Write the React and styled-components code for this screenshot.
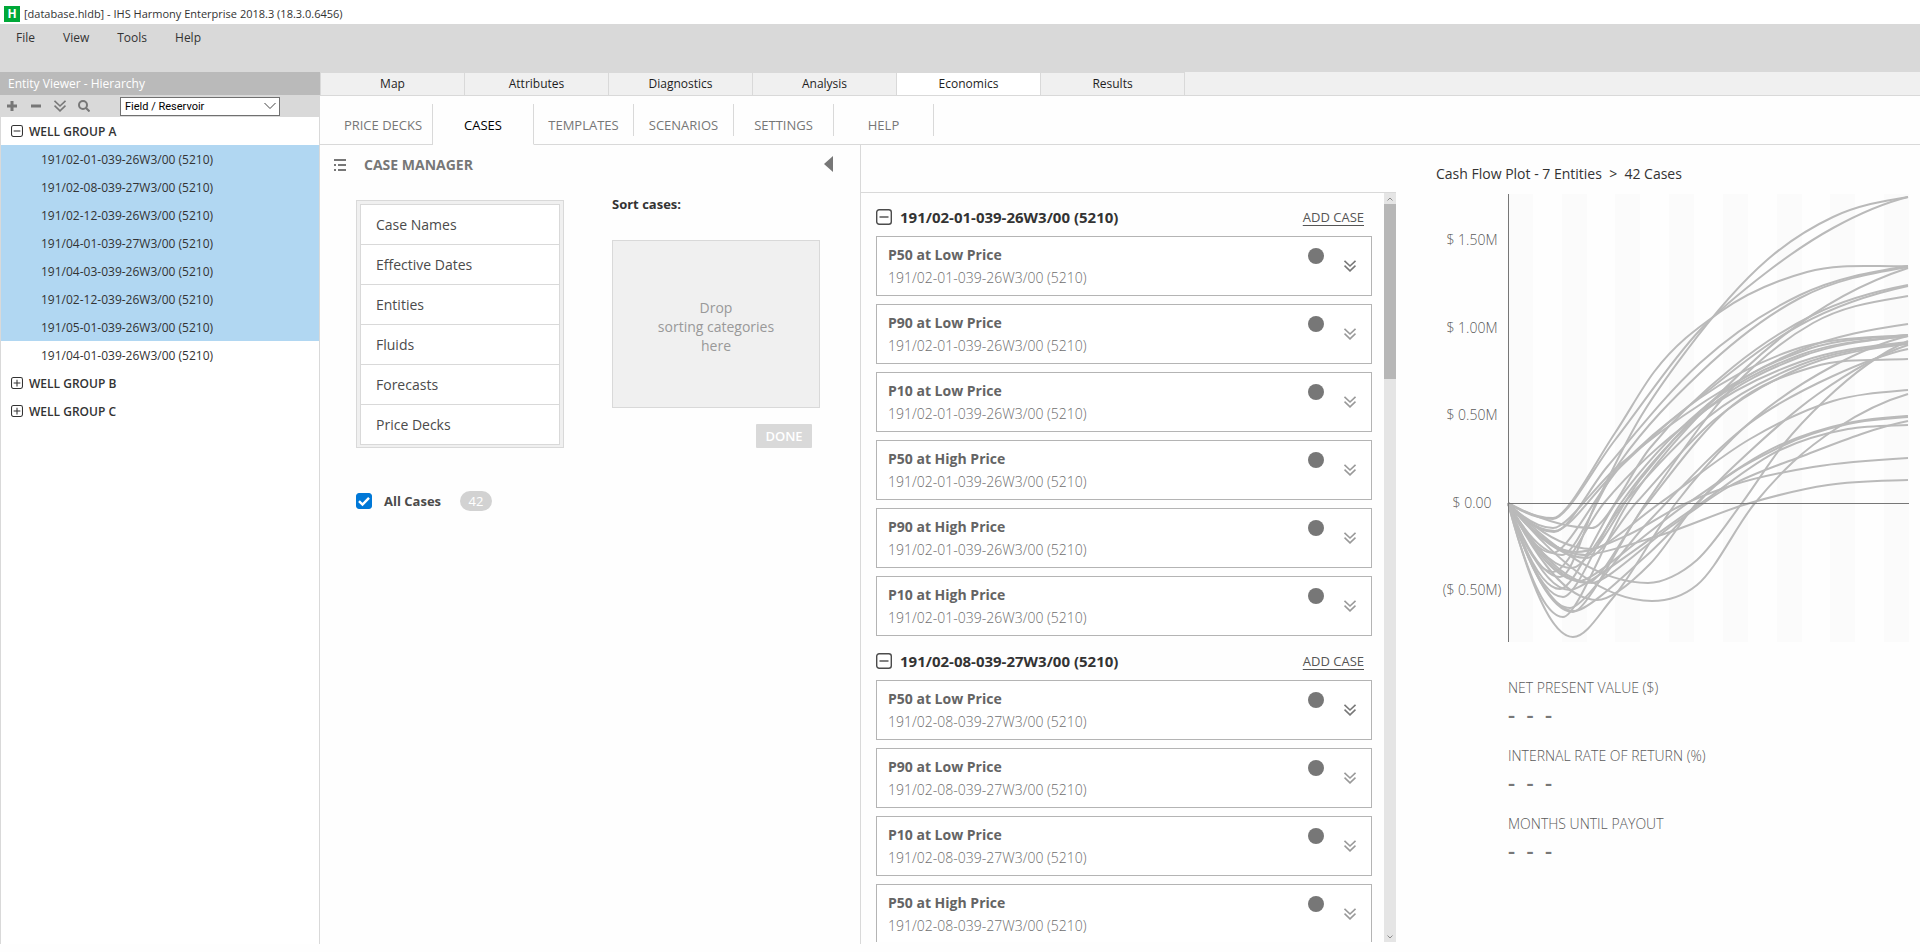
import React, { useState } from "react";
import styled, { createGlobalStyle } from "styled-components";

const GlobalStyle = createGlobalStyle`
  * {
    box-sizing: border-box;
  }

  body {
    margin: 0;
    background: #fefefe;
    color: #333;
    font-family: "Open Sans", "Noto Sans", sans-serif;
    font-size: 12px;
  }

  button,
  select,
  input {
    margin: 0;
    padding: 0;
    border: 0;
    background: none;
    color: inherit;
    font: inherit;
  }
`;

const Page = styled.div`
  display: flex;
  flex-direction: column;
  height: 100vh;
  padding-bottom: 8px;
`;

const TitleBar = styled.header`
  display: flex;
  align-items: center;
  gap: 4px;
  height: 24px;
  flex: none;
  padding: 3px 4px 0;
  background: #fff;
  font-size: 11px;
`;

const AppIcon = styled.span`
  width: 16px;
  height: 16px;
  background: #00a838;
  color: #fff;
  font-size: 12px;
  font-weight: 700;
  line-height: 16px;
  text-align: center;
`;

const MenuBar = styled.nav`
  display: flex;
  align-items: flex-start;
  gap: 28px;
  height: 48px;
  flex: none;
  padding: 5px 16px;
  background: #d9d9d9;
`;

const MenuItem = styled.button`
  line-height: 17px;
`;

const Body = styled.div`
  display: flex;
  flex: 1;
  min-height: 0;
`;

const Sidebar = styled.aside`
  display: flex;
  flex-direction: column;
  width: 320px;
  flex: none;
  background: #fff;
`;

const SidebarTitle = styled.h2`
  margin: 0;
  height: 23px;
  padding: 0 8px;
  background: #bababa;
  color: #fff;
  font-size: 12px;
  font-weight: 400;
  line-height: 23px;
`;

const Toolbar = styled.div`
  display: flex;
  align-items: center;
  gap: 12px;
  height: 22px;
  padding: 0 6px;
  background: #d9d9d9;
`;

const ToolButton = styled.button`
  display: flex;
  width: 12px;
  height: 12px;
  color: #777;
`;

const SelectWrap = styled.label`
  display: grid;
  align-items: center;
  width: 160px;
  margin-left: 18px;

  > * {
    grid-area: 1 / 1;
  }

  svg {
    justify-self: end;
    margin-right: 4px;
    pointer-events: none;
  }
`;

const Select = styled.select`
  appearance: none;
  width: 100%;
  height: 19px;
  padding-left: 4px;
  border: 1px solid #707070;
  background: #fff;
  color: #000;
  font-family: Roboto, sans-serif;
  font-size: 11px;
`;

const Tree = styled.ul`
  flex: 1;
  margin: 0;
  padding: 0;
  border: solid #d9d9d9;
  border-width: 0 1px;
  list-style: none;
`;

const GroupRow = styled.button`
  display: flex;
  align-items: center;
  gap: 6px;
  width: 100%;
  height: 28px;
  padding-left: 10px;
  font-weight: 600;
`;

const EntityRow = styled.button`
  display: block;
  width: 100%;
  height: 28px;
  padding-left: 40px;
  background: ${(p) => (p.$selected ? "#b1d7f2" : "transparent")};
  text-align: left;
`;

const Main = styled.main`
  display: flex;
  flex-direction: column;
  flex: 1;
  min-width: 0;
`;

const MainTabs = styled.nav`
  display: flex;
  height: 24px;
  flex: none;
  background: #f0f0f0;
  border-bottom: 1px solid #d9d9d9;
`;

const MainTab = styled.button`
  width: 144px;
  padding-bottom: 2px;
  border: solid #d9d9d9;
  border-width: 1px 0 0 1px;
  background: ${(p) => (p.$active ? "#fff" : "#f0f0f0")};
  color: #1e1e1e;

  &:last-child {
    width: 145px;
    border-right-width: 1px;
  }
`;

const SubTabs = styled.nav`
  display: flex;
  height: 49px;
  flex: none;
  padding-top: 8px;

  &::after {
    content: "";
    flex: 1;
    border-bottom: 1px solid #d9d9d9;
  }
`;

const SubTab = styled.button`
  width: ${(p) => p.$width}px;
  padding-left: ${(p) => (p.$first ? 14 : 0)}px;
  border-bottom: 1px solid ${(p) => (p.$active ? "transparent" : "#d9d9d9")};
  border-right: ${(p) => (p.$tall ? "1px solid #d9d9d9" : "0")};
  color: ${(p) => (p.$active ? "#000" : "#777")};
  font-size: 13px;

  span {
    display: block;
    height: 32px;
    margin-bottom: 8px;
    padding-top: 11px;
    border-right: ${(p) => (p.$tall ? "0" : "1px solid #d9d9d9")};
    line-height: 20px;
  }
`;

const Columns = styled.div`
  display: grid;
  grid-template-columns: 540fr 536fr 524fr;
  flex: 1;
  min-height: 0;
`;

const Manager = styled.section`
  min-width: 0;
`;

const ManagerHead = styled.div`
  display: flex;
  align-items: center;
  gap: 18px;
  height: 39px;
  padding: 0 27px 0 14px;
  color: #777;

  button {
    display: flex;
    margin-left: auto;
    margin-top: -2px;
  }
`;

const ManagerTitle = styled.h2`
  margin: 0;
  font-size: 14px;
  font-weight: 700;
`;

const ManagerBody = styled.div`
  display: flex;
  gap: 48px;
  padding: 16px 36px 0;
`;

const CategoryList = styled.ul`
  width: 208px;
  height: 248px;
  margin: 0;
  padding: 3px;
  border: 1px solid #d9d9d9;
  background: #f0f0f0;
  list-style: none;
`;

const Category = styled.li`
  height: 40px;
  padding-left: 15px;
  border: solid #d9d9d9;
  border-width: 1px 1px 0;
  background: #fff;
  color: #4b4b4b;
  font-size: 14px;
  line-height: 40px;

  &:last-child {
    border-bottom-width: 1px;
    height: 41px;
  }
`;

const SortArea = styled.div`
  width: 208px;
`;

const SortLabel = styled.h3`
  margin: -6px 0 26px;
  font-size: 13px;
  font-weight: 700;
  line-height: 20px;
`;

const DropZone = styled.div`
  display: flex;
  align-items: center;
  justify-content: center;
  height: 168px;
  border: 1px solid #d9d9d9;
  background: #f0f0f0;
  color: #999;
  font-size: 14px;
  line-height: 19px;
  text-align: center;

  p {
    margin: 4px 0 0;
  }
`;

const DoneButton = styled.button`
  display: block;
  width: 56px;
  height: 24px;
  margin: 16px 8px 0 auto;
  border-radius: 1px;
  background: #d9d9d9;
  color: #fff;
  font-size: 13px;
  font-weight: 600;
`;

const AllCases = styled.div`
  display: flex;
  align-items: center;
  padding: 43px 36px 0;

  label {
    display: flex;
    align-items: center;
    gap: 12px;
    font-size: 13px;
    font-weight: 700;
    color: #4b4b4b;
  }
`;

const CheckWrap = styled.span`
  display: grid;

  > * {
    grid-area: 1 / 1;
  }

  svg {
    pointer-events: none;
  }
`;

const Checkbox = styled.input`
  appearance: none;
  width: 16px;
  height: 16px;
  border: 1px solid #0078d7;
  border-radius: 3px;
  background: #fff;

  &:checked {
    background: #0078d7;
  }
`;

const Badge = styled.span`
  width: 32px;
  height: 20px;
  margin-left: 19px;
  border-radius: 10px;
  background: #d2d2d2;
  color: #fff;
  font-size: 13px;
  line-height: 20px;
  text-align: center;
`;

const CasesColumn = styled.section`
  display: flex;
  flex-direction: column;
  min-width: 0;
  min-height: 0;
  border-left: 1px solid #d9d9d9;
`;

const CasesTop = styled.div`
  height: 48px;
  flex: none;
  border-bottom: 1px solid #d9d9d9;
`;

const CasesScroll = styled.div`
  display: flex;
  flex: 1;
  min-height: 0;
  margin-bottom: 2px;
`;

const CaseGroups = styled.div`
  flex: 1;
  padding: 0 12px 0 15px;
  overflow: hidden;

  section + section {
    margin-top: 1px;
  }
`;

const GroupHead = styled.div`
  display: flex;
  align-items: center;
  gap: 8px;
  height: 43px;
  padding: 5px 8px 0 0;

  button {
    display: flex;
    color: #4b4b4b;
  }

  h3 {
    flex: 1;
    margin: 0;
    color: #333;
    font-size: 15px;
    font-weight: 700;
  }

  a {
    color: #555;
    font-size: 13px;
    text-underline-offset: 3px;
  }
`;

const CaseCard = styled.article`
  display: flex;
  height: 60px;
  margin-bottom: 8px;
  padding: 8px 15px 0 11px;
  border: 1px solid #b4b4b4;
  background: #fff;

  &:last-child {
    margin-bottom: 0;
  }
`;

const CaseText = styled.div`
  flex: 1;
  font-size: 14px;

  h4 {
    margin: 0;
    color: #646464;
    font-size: 14px;
    font-weight: 700;
    line-height: 20px;
  }

  p {
    margin: 3px 0 0;
    color: #6e6e6e;
    font-weight: 300;
    line-height: 20px;
  }
`;

const Dot = styled.span`
  width: 16px;
  height: 16px;
  margin: 3px 20px 0 0;
  border-radius: 50%;
  background: #777;
`;

const ExpandButton = styled.button`
  display: flex;
  align-self: flex-start;
  margin-top: 15px;
  color: ${(p) => (p.$dark ? "#777" : "#999")};
`;

const ScrollBar = styled.div`
  display: flex;
  flex-direction: column;
  align-items: center;
  justify-content: space-between;
  width: 12px;
  background: #e5e5e5;
  color: #8c8c8c;
`;

const ScrollThumb = styled.div`
  width: 12px;
  height: 175px;
  margin-bottom: auto;
  background: #b7b7b7;
`;

const ScrollButton = styled.button`
  display: flex;
  align-items: center;
  justify-content: center;
  width: 12px;
  height: 11px;
`;

const PlotColumn = styled.section`
  min-width: 0;
  padding: 19px 11px 0 40px;
`;

const PlotTitle = styled.h2`
  margin: 0 0 10px;
  font-size: 14px;
  font-weight: 400;
  line-height: 20px;
  white-space: pre;
`;

const Chart = styled.svg`
  display: block;
  width: 100%;

  text {
    fill: #5a5a5a;
    font-size: 14px;
    font-weight: 300;
    text-anchor: middle;
  }
`;

const Metrics = styled.dl`
  margin: 0;
  padding: 36px 0 0 72px;
  color: #5a5a5a;
  font-size: 14px;

  dt {
    font-weight: 300;
    line-height: 20px;
  }

  dd {
    margin: 4px 0 20px;
    color: #777;
    font-size: 22px;
    font-weight: 600;
    line-height: 24px;
    white-space: pre;
  }
`;

const entities = [
  ["191/02-01-039-26W3/00 (5210)", true],
  ["191/02-08-039-27W3/00 (5210)", true],
  ["191/02-12-039-26W3/00 (5210)", true],
  ["191/04-01-039-27W3/00 (5210)", true],
  ["191/04-03-039-26W3/00 (5210)", true],
  ["191/02-12-039-26W3/00 (5210)", true],
  ["191/05-01-039-26W3/00 (5210)", true],
  ["191/04-01-039-26W3/00 (5210)", false],
];

const mainTabs = ["Map", "Attributes", "Diagnostics", "Analysis", "Economics", "Results"];
const subTabs = [
  ["PRICE DECKS", 113],
  ["CASES", 101],
  ["TEMPLATES", 100],
  ["SCENARIOS", 100],
  ["SETTINGS", 100],
  ["HELP", 100],
];
const categories = ["Case Names", "Effective Dates", "Entities", "Fluids", "Forecasts", "Price Decks"];
const caseGroups = [
  {
    entity: "191/02-01-039-26W3/00 (5210)",
    cases: [
      "P50 at Low Price",
      "P90 at Low Price",
      "P10 at Low Price",
      "P50 at High Price",
      "P90 at High Price",
      "P10 at High Price",
    ],
  },
  {
    entity: "191/02-08-039-27W3/00 (5210)",
    cases: ["P50 at Low Price", "P90 at Low Price", "P10 at Low Price", "P50 at High Price"],
  },
];
const metrics = ["NET PRESENT VALUE ($)", "INTERNAL RATE OF RETURN (%)", "MONTHS UNTIL PAYOUT"];

const yLabels = [
  ["$ 1.50M", 46],
  ["$ 1.00M", 134],
  ["$ 0.50M", 221],
  ["$ 0.00", 309],
  ["($ 0.50M)", 396],
];

const stripes = [0, 54, 107, 161, 215, 269, 322, 376];

// cash flow curves in plot units, all of them start at the origin (0, 309);
// the first point of each is its lowest one
const curves = [
  [[52, 383], [88, 309], [129, 229], [179, 156], [259, 66], [325, 23], [400, 3]],
  [[45, 325], [107, 246], [192, 136], [259, 78], [325, 34], [400, 3]],
  [[45, 324], [107, 239], [146, 178], [212, 118], [299, 78], [400, 72]],
  [[46, 338], [99, 273], [192, 169], [292, 101], [400, 72]],
  [[54, 361], [112, 268], [192, 179], [292, 104], [400, 73]],
  [[55, 423], [120, 309], [199, 213], [275, 142], [400, 74]],
  [[84, 334], [142, 254], [225, 173], [305, 121], [400, 91]],
  [[45, 359], [112, 273], [192, 203], [292, 131], [400, 92]],
  [[65, 418], [138, 309], [225, 193], [305, 129], [400, 102]],
  [[45, 334], [109, 273], [199, 206], [292, 156], [400, 130]],
  [[47, 337], [109, 276], [192, 204], [285, 156], [400, 141]],
  [[77, 361], [132, 286], [199, 211], [292, 158], [400, 141]],
  [[52, 395], [108, 309], [192, 217], [292, 161], [400, 142]],
  [[55, 403], [113, 309], [200, 214], [292, 163], [400, 142]],
  [[45, 378], [96, 309], [189, 222], [292, 168], [400, 148]],
  [[64, 374], [116, 309], [199, 224], [292, 171], [400, 149]],
  [[79, 364], [128, 309], [205, 227], [292, 174], [400, 150]],
  [[65, 443], [104, 405], [168, 309], [225, 244], [325, 172], [400, 142]],
  [[140, 389], [189, 366], [234, 309], [275, 251], [317, 206], [400, 147]],
  [[144, 407], [189, 391], [247, 309], [285, 268], [329, 234], [400, 200]],
  [[62, 414], [142, 326], [242, 229], [325, 182], [400, 155]],
  [[79, 389], [135, 315], [225, 211], [305, 173], [400, 165]],
  [[84, 355], [152, 309], [242, 245], [325, 207], [400, 196]],
  [[72, 387], [180, 309], [272, 251], [340, 229], [400, 222]],
  [[89, 406], [142, 370], [189, 309], [272, 253], [340, 230], [400, 223]],
  [[84, 389], [165, 331], [222, 292], [292, 263], [400, 227]],
  [[62, 396], [189, 312], [272, 256], [340, 235], [400, 231]],
  [[69, 358], [122, 340], [172, 312], [225, 291], [305, 273], [400, 264]],
  [[77, 361], [150, 342], [242, 309], [320, 291], [400, 286]],
  [[66, 417], [138, 362], [225, 273], [310, 200], [400, 151]],
];

// cubic segments: flat at the minimum, parabolic tangents at the other points
const toPath = (points) => {
  const pts = [[0, 309], ...points];
  const last = pts.length - 1;
  const step = (i) => pts[i + 1][0] - pts[i][0];
  const slope = (i) => (pts[i + 1][1] - pts[i][1]) / step(i);
  const tangents = pts.map((_, i) => {
    if (i === 0) return slope(0) * 1.8;
    if (i === 1) return 0;
    if (i === last) return slope(last - 1) * 0.6;
    return (slope(i - 1) * step(i) + slope(i) * step(i - 1)) / (step(i) + step(i - 1));
  });
  return pts.reduce((d, [x, y], i) => {
    if (i === 0) return `M${x} ${y}`;
    const [px, py] = pts[i - 1];
    const h = (x - px) / 3;
    // a short handle after the minimum keeps the turn tight
    const out = i === 2 ? Math.min(h, 14) : h;
    return `${d}C${px + out} ${py + out * tangents[i - 1]} ${x - h} ${y - h * tangents[i]} ${x} ${y}`;
  }, "");
};

const BoxIcon = ({ size, plus }) => (
  <svg width={size} height={size} viewBox="0 0 16 16" fill="none" stroke="currentColor" strokeWidth="1.4">
    <rect x="0.7" y="0.7" width="14.6" height="14.6" rx="2.5" />
    <path d={plus ? "M3.5 8h9M8 3.5v9" : "M3.5 8h9"} />
  </svg>
);

const DoubleChevron = () => (
  <svg width="12" height="12" viewBox="0 0 12 12" fill="none" stroke="currentColor" strokeWidth="1.6">
    <path d="M0.5 0.8 6 6 11.5 0.8M0.5 5.6 6 10.8 11.5 5.6" />
  </svg>
);

const EntityViewer = () => (
  <Sidebar>
    <SidebarTitle>Entity Viewer - Hierarchy</SidebarTitle>
    <Toolbar>
      <ToolButton aria-label="Add">
        <svg width="12" height="12" stroke="currentColor" strokeWidth="3">
          <path d="M1 6h10M6 1v10" />
        </svg>
      </ToolButton>
      <ToolButton aria-label="Remove">
        <svg width="12" height="12" stroke="currentColor" strokeWidth="3">
          <path d="M1 6h10" />
        </svg>
      </ToolButton>
      <ToolButton aria-label="Expand all">
        <DoubleChevron />
      </ToolButton>
      <ToolButton aria-label="Search">
        <svg width="12" height="12" fill="none" stroke="currentColor" strokeWidth="2">
          <circle cx="5" cy="5" r="4" />
          <path d="M8 8l3.5 3.5" />
        </svg>
      </ToolButton>
      <SelectWrap>
        <Select aria-label="Hierarchy">
          <option>Field / Reservoir</option>
        </Select>
        <svg width="12" height="8" fill="none" stroke="#444">
          <path d="M0.5 1 6 6.5 11.5 1" />
        </svg>
      </SelectWrap>
    </Toolbar>
    <Tree>
      <li>
        <GroupRow>
          <BoxIcon size={12} />
          WELL GROUP A
        </GroupRow>
      </li>
      {entities.map(([name, selected], i) => (
        <li key={i}>
          <EntityRow $selected={selected}>{name}</EntityRow>
        </li>
      ))}
      <li>
        <GroupRow>
          <BoxIcon size={12} plus />
          WELL GROUP B
        </GroupRow>
      </li>
      <li>
        <GroupRow>
          <BoxIcon size={12} plus />
          WELL GROUP C
        </GroupRow>
      </li>
    </Tree>
  </Sidebar>
);

const CaseManager = () => {
  const [all, setAll] = useState(true);

  return (
    <Manager>
      <ManagerHead>
        <svg width="12" height="12" fill="currentColor">
          <path d="M0 0h12v2H0zM0 5h2v2H0zM4 5h8v2H4zM0 10h2v2H0zM4 10h8v2H4z" />
        </svg>
        <ManagerTitle>CASE MANAGER</ManagerTitle>
        <button aria-label="Collapse">
          <svg width="9" height="16" fill="currentColor">
            <path d="M9 0v16L0 8z" />
          </svg>
        </button>
      </ManagerHead>
      <ManagerBody>
        <CategoryList>
          {categories.map((c) => (
            <Category key={c}>{c}</Category>
          ))}
        </CategoryList>
        <SortArea>
          <SortLabel>Sort cases:</SortLabel>
          <DropZone>
            <p>
              Drop
              <br />
              sorting categories
              <br />
              here
            </p>
          </DropZone>
          <DoneButton>DONE</DoneButton>
        </SortArea>
      </ManagerBody>
      <AllCases>
        <label>
          <CheckWrap>
            <Checkbox type="checkbox" checked={all} onChange={() => setAll(!all)} />
            <svg width="16" height="16" fill="none" stroke="#fff" strokeWidth="2.4">
              <path d="M3 8.2 6.5 11.6 13 4.8" />
            </svg>
          </CheckWrap>
          All Cases
        </label>
        <Badge>42</Badge>
      </AllCases>
    </Manager>
  );
};

const Cases = () => (
  <CasesColumn>
    <CasesTop />
    <CasesScroll>
      <CaseGroups>
        {caseGroups.map(({ entity, cases }) => (
          <section key={entity}>
            <GroupHead>
              <button aria-label="Collapse group">
                <BoxIcon size={16} />
              </button>
              <h3>{entity}</h3>
              <a href="#add">ADD CASE</a>
            </GroupHead>
            {cases.map((name, i) => (
              <CaseCard key={name}>
                <CaseText>
                  <h4>{name}</h4>
                  <p>{entity}</p>
                </CaseText>
                <Dot />
                <ExpandButton $dark={i === 0} aria-label="Expand case">
                  <DoubleChevron />
                </ExpandButton>
              </CaseCard>
            ))}
          </section>
        ))}
      </CaseGroups>
      <ScrollBar>
        <ScrollButton aria-label="Scroll up">
          <svg width="6" height="4" fill="none" stroke="currentColor">
            <path d="M0.5 3.5 3 1l2.5 2.5" />
          </svg>
        </ScrollButton>
        <ScrollThumb />
        <ScrollButton aria-label="Scroll down">
          <svg width="6" height="4" fill="none" stroke="currentColor">
            <path d="M0.5 0.5 3 3 5.5 0.5" />
          </svg>
        </ScrollButton>
      </ScrollBar>
    </CasesScroll>
  </CasesColumn>
);

const CashFlow = () => (
  <PlotColumn>
    <PlotTitle>{"Cash Flow Plot - 7 Entities  >  42 Cases"}</PlotTitle>
    <Chart viewBox="0 0 473 448">
      {yLabels.map(([label, y]) => (
        <text key={label} x="36" y={y + 5}>
          {label}
        </text>
      ))}
      <g transform="translate(72 0)">
        {stripes.map((x) => (
          <rect key={x} x={x} width="25" height="448" fill="#fbfbfb" />
        ))}
        <g fill="none" stroke="#bababa" strokeWidth="2">
          {curves.map((points, i) => (
            <path key={i} d={toPath(points)} />
          ))}
        </g>
        <path d="M0.5 0v448M0.5 309.5H401" stroke="#777" />
      </g>
    </Chart>
    <Metrics>
      {metrics.map((m) => (
        <React.Fragment key={m}>
          <dt>{m}</dt>
          <dd>{"-  -  -"}</dd>
        </React.Fragment>
      ))}
    </Metrics>
  </PlotColumn>
);

const App = () => (
  <>
    <GlobalStyle />
    <Page>
      <TitleBar>
        <AppIcon>H</AppIcon>
        <span>[database.hldb] - IHS Harmony Enterprise 2018.3 (18.3.0.6456)</span>
      </TitleBar>
      <MenuBar>
        {["File", "View", "Tools", "Help"].map((m) => (
          <MenuItem key={m}>{m}</MenuItem>
        ))}
      </MenuBar>
      <Body>
        <EntityViewer />
        <Main>
          <MainTabs>
            {mainTabs.map((t) => (
              <MainTab key={t} $active={t === "Economics"}>
                {t}
              </MainTab>
            ))}
          </MainTabs>
          <SubTabs>
            {subTabs.map(([label, width], i) => (
              <SubTab key={label} $width={width} $first={i === 0} $tall={i < 2} $active={i === 1}>
                <span>{label}</span>
              </SubTab>
            ))}
          </SubTabs>
          <Columns>
            <CaseManager />
            <Cases />
            <CashFlow />
          </Columns>
        </Main>
      </Body>
    </Page>
  </>
);

export default App;
